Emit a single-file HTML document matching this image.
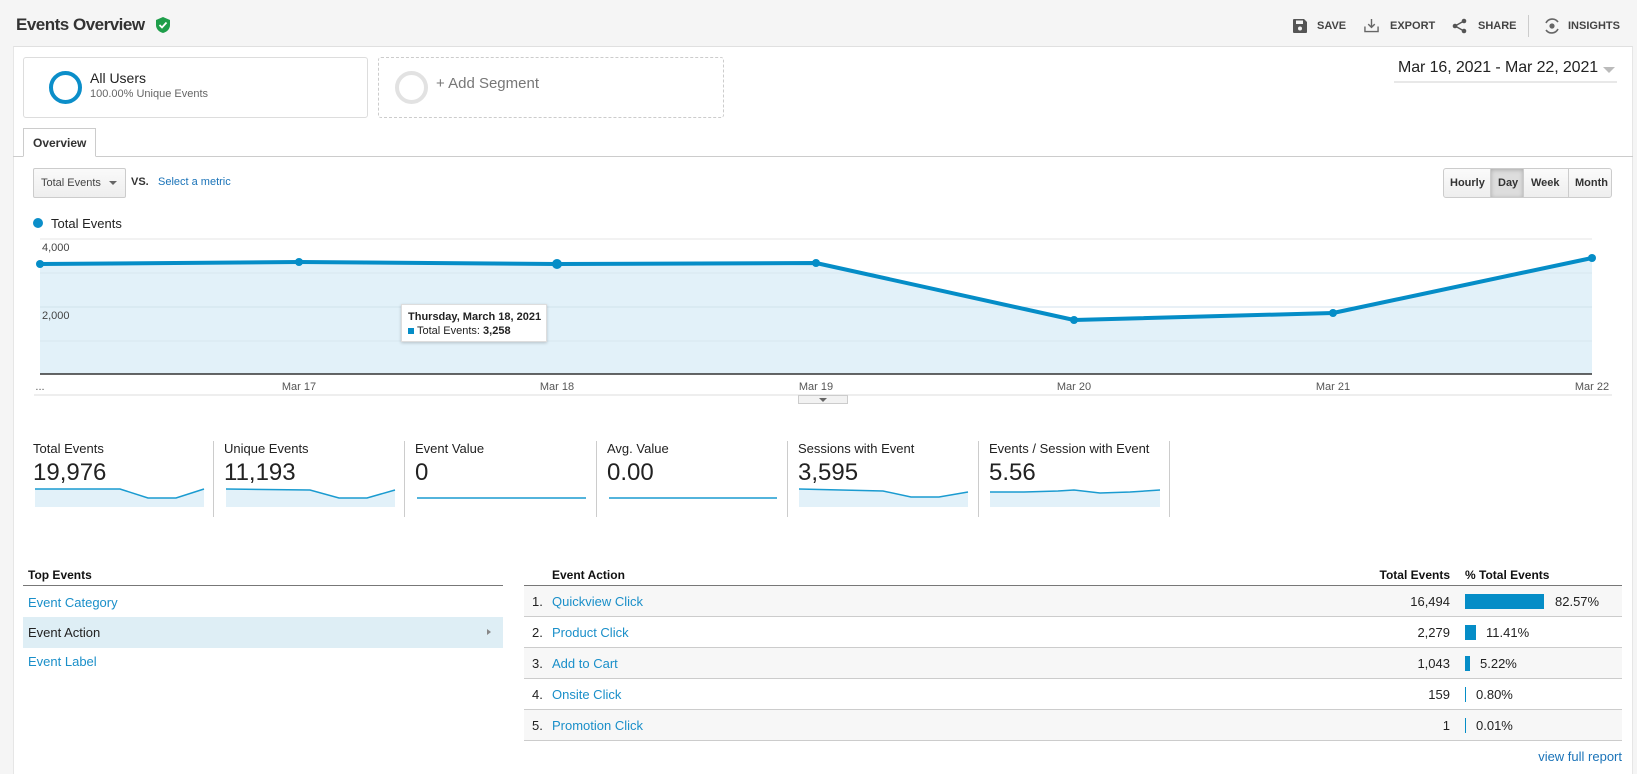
<!DOCTYPE html>
<html><head><meta charset="utf-8"><style>
*{margin:0;padding:0;box-sizing:border-box}
body{width:1637px;height:774px;overflow:hidden;background:#f5f5f5;font-family:"Liberation Sans",Arial,sans-serif;color:#222;position:relative}
.a{position:absolute;white-space:nowrap}
.hb{font-size:11px;font-weight:bold;color:#444;top:20px}
.lnk{color:#1a8fc9}
.ml{font-size:13px;color:#222}
.mv{font-size:24px;color:#222}
.dv{position:absolute;top:441px;height:76px;width:1px;background:#ccc}
.row{position:absolute;left:524px;width:1098px;height:31px;border-bottom:1px solid #ccc;font-size:13px}
.row.o{background:#f7f7f7}
.row span{position:absolute;top:8px}
</style></head><body>
<!-- header -->
<div class="a" style="left:16px;top:15px;font-size:17px;font-weight:bold;color:#333;letter-spacing:-0.5px">Events Overview</div>
<svg class="a" style="left:156px;top:17px" width="14" height="16" viewBox="0 0 14 16"><path d="M7 0L14 3V8C14 12 11 15 7 16C3 15 0 12 0 8V3Z" fill="#1e9e4a"/><path d="M3.5 8L6 10.5L10.5 5.5" stroke="#fff" stroke-width="1.8" fill="none"/></svg>
<svg class="a" style="left:1293px;top:19px" width="14" height="14" viewBox="0 0 14 14"><path d="M0 1Q0 0 1 0H11L14 3V13Q14 14 13 14H1Q0 14 0 13Z" fill="#555"/><rect x="3" y="1.5" width="7" height="3.5" fill="#f5f5f5"/><circle cx="7" cy="9.5" r="2" fill="#f5f5f5"/></svg>
<div class="a hb" style="left:1317px">SAVE</div>
<svg class="a" style="left:1364px;top:18px" width="15" height="15" viewBox="0 0 16 16" fill="none" stroke="#666" stroke-width="1.5"><path d="M8 1V10M4.5 6.5L8 10L11.5 6.5M1 9V14.5H15V9"/></svg>
<div class="a hb" style="left:1390px">EXPORT</div>
<svg class="a" style="left:1452px;top:18px" width="15" height="16" viewBox="0 0 15 16"><circle cx="12" cy="3" r="2.3" fill="#555"/><circle cx="3" cy="8" r="2.3" fill="#555"/><circle cx="12" cy="13" r="2.3" fill="#555"/><path d="M12 3L3 8L12 13" stroke="#555" stroke-width="1.4" fill="none"/></svg>
<div class="a hb" style="left:1478px">SHARE</div>
<div class="a" style="left:1528px;top:15px;width:1px;height:22px;background:#ccc"></div>
<svg class="a" style="left:1543px;top:17px" width="18" height="18" viewBox="0 0 18 18" fill="none" stroke="#666" stroke-width="1.6"><path d="M3 6A7 7 0 0 1 15 5M15 12A7 7 0 0 1 3 13"/><circle cx="9" cy="9" r="2.6" fill="#666" stroke="none"/></svg>
<div class="a hb" style="left:1568px">INSIGHTS</div>
<!-- panel -->
<div class="a" style="left:13px;top:46px;width:1620px;height:728px;background:#fff;border-top:1px solid #e0e0e0;border-left:1px solid #e6e6e6;border-right:1px solid #e6e6e6"></div>
<div class="a" style="left:23px;top:57px;width:345px;height:61px;border:1px solid #ddd;border-radius:3px"></div>
<div class="a" style="left:49px;top:71px;width:33px;height:33px;border:4px solid #0b8ec9;border-radius:50%"></div>
<div class="a" style="left:90px;top:70px;font-size:14px;color:#222">All Users</div>
<div class="a" style="left:90px;top:88px;font-size:11px;color:#666">100.00% Unique Events</div>
<div class="a" style="left:378px;top:57px;width:346px;height:61px;border:1px dashed #ccc;border-radius:3px"></div>
<div class="a" style="left:395px;top:71px;width:33px;height:33px;border:4px solid #e2e2e2;border-radius:50%"></div>
<div class="a" style="left:436px;top:75px;font-size:15px;color:#777">+ Add Segment</div>
<div class="a" style="left:1398px;top:59px;font-size:16px;color:#222;letter-spacing:-0.1px">Mar 16, 2021 - Mar 22, 2021</div>
<div class="a" style="left:1603px;top:67px;width:0;height:0;border-left:6px solid transparent;border-right:6px solid transparent;border-top:6px solid #bbb"></div>
<div class="a" style="left:1394px;top:81px;width:223px;height:2px;background:#e8e8e8"></div>
<!-- tab -->
<div class="a" style="left:13px;top:156px;width:1620px;height:1px;background:#ccc"></div>
<div class="a" style="left:23px;top:128px;width:73px;height:29px;border:1px solid #ccc;border-bottom:1px solid #fff;background:#fff;font-size:12px;font-weight:bold;padding:7px 0 0 9px;color:#333">Overview</div>
<!-- controls -->
<div class="a" style="left:33px;top:168px;width:93px;height:30px;border:1px solid #ccc;border-radius:2px;background:linear-gradient(#fafafa,#eee);font-size:11px;color:#444;padding:8px 0 0 7px">Total Events</div>
<div class="a" style="left:109px;top:181px;border-left:4px solid transparent;border-right:4px solid transparent;border-top:4px solid #666"></div>
<div class="a" style="left:131px;top:176px;font-size:11px;font-weight:bold;color:#333">VS.</div>
<div class="a" style="left:158px;top:176px;font-size:11px;color:#1a73b8">Select a metric</div>
<div class="a" style="left:1443px;top:168px;width:169px;height:30px;border:1px solid #ccc;border-radius:3px;background:linear-gradient(#fbfbfb,#eee);font-size:11px;font-weight:bold;color:#333">
<span class="a" style="left:6px;top:8px">Hourly</span>
<span class="a" style="left:46px;top:0;width:34px;height:28px;background:#ddd;box-shadow:inset 0 1px 4px #aaa;border-left:1px solid #ccc;border-right:1px solid #ccc"></span>
<span class="a" style="left:54px;top:8px">Day</span>
<span class="a" style="left:87px;top:8px">Week</span>
<span class="a" style="left:124px;top:0;width:1px;height:28px;background:#ccc"></span>
<span class="a" style="left:131px;top:8px">Month</span></div>
<!-- legend -->
<div class="a" style="left:33px;top:218px;width:10px;height:10px;border-radius:50%;background:#0b8ec9"></div>
<div class="a" style="left:51px;top:216px;font-size:13px;color:#222">Total Events</div>
<!-- chart -->
<svg class="a" style="left:0;top:230px" width="1637" height="180">
<line x1="40" y1="9" x2="1592" y2="9" stroke="#e6e6e6"/>
<polygon points="40,34 299,32 557,34 816,33 1074,90 1333,83 1592,28 1592,144 40,144" fill="#e2f1f9"/>
<line x1="40" y1="43" x2="1592" y2="43" stroke="#d8e8f0"/>
<line x1="40" y1="77" x2="1592" y2="77" stroke="#d0e2ec"/>
<line x1="40" y1="111" x2="1592" y2="111" stroke="#d8e8f0"/>
<polyline points="40,34 299,32 557,34 816,33 1074,90 1333,83 1592,28" fill="none" stroke="#058dc7" stroke-width="4" stroke-linejoin="round"/>
<g fill="#058dc7"><circle cx="40" cy="34" r="4"/><circle cx="299" cy="32" r="4"/><circle cx="557" cy="34" r="5"/><circle cx="816" cy="33" r="4"/><circle cx="1074" cy="90" r="4"/><circle cx="1333" cy="83" r="4"/><circle cx="1592" cy="28" r="4"/></g>
<line x1="40" y1="144" x2="1592" y2="144" stroke="#333" stroke-width="1.5"/>
<text x="42" y="21" font-size="11" fill="#444" font-family="Liberation Sans">4,000</text>
<text x="42" y="89" font-size="11" fill="#444" font-family="Liberation Sans">2,000</text>
<g font-size="11" fill="#555" font-family="Liberation Sans" text-anchor="middle"><text x="40" y="160">...</text><text x="299" y="160">Mar 17</text><text x="557" y="160">Mar 18</text><text x="816" y="160">Mar 19</text><text x="1074" y="160">Mar 20</text><text x="1333" y="160">Mar 21</text><text x="1592" y="160">Mar 22</text></g>
<line x1="34" y1="165" x2="1612" y2="165" stroke="#ddd"/>
<rect x="798.5" y="165.5" width="49" height="8" fill="#f2f2f2" stroke="#ccc"/>
<polygon points="819,168 827,168 823,172" fill="#666"/>
</svg>
<div class="a" style="left:401px;top:304px;width:146px;height:38px;background:#fff;border:1px solid #ddd;box-shadow:0 1px 3px rgba(0,0,0,.2);font-size:11px;padding:5px 0 0 6px;line-height:14px">
<b>Thursday, March 18, 2021</b><br><span style="display:inline-block;width:6px;height:6px;background:#058dc7;margin-right:3px"></span>Total Events: <b>3,258</b></div>
<!-- metrics -->
<div class="a ml" style="left:33px;top:441px">Total Events</div><div class="a mv" style="left:33px;top:459px">19,976</div>
<div class="a ml" style="left:224px;top:441px">Unique Events</div><div class="a mv" style="left:224px;top:459px">11,193</div>
<div class="a ml" style="left:415px;top:441px">Event Value</div><div class="a mv" style="left:415px;top:459px">0</div>
<div class="a ml" style="left:607px;top:441px">Avg. Value</div><div class="a mv" style="left:607px;top:459px">0.00</div>
<div class="a ml" style="left:798px;top:441px">Sessions with Event</div><div class="a mv" style="left:798px;top:459px">3,595</div>
<div class="a ml" style="left:989px;top:441px">Events / Session with Event</div><div class="a mv" style="left:989px;top:459px">5.56</div>
<div class="dv" style="left:213px"></div><div class="dv" style="left:404px"></div><div class="dv" style="left:596px"></div><div class="dv" style="left:787px"></div><div class="dv" style="left:978px"></div><div class="dv" style="left:1169px"></div>
<svg class="a" style="left:0;top:480px" width="1200" height="30">
<g fill="#e2f1f9"><polygon points="35,9 120,9 148,18 176,18 204,9 204,27 35,27"/><polygon points="226,9 310,10 339,18 367,18 395,10 395,27 226,27"/><polygon points="799,9 883,11 911,17 939,17 968,12 968,27 799,27"/><polygon points="990,12 1024,12 1058,11 1074,10 1100,13 1130,12 1160,10 1160,27 990,27"/></g>
<g fill="none" stroke="#1a9bd0" stroke-width="1.5"><polyline points="35,9 120,9 148,18 176,18 204,9"/><polyline points="226,9 310,10 339,18 367,18 395,10"/><line x1="417" y1="18" x2="586" y2="18"/><line x1="609" y1="18" x2="777" y2="18"/><polyline points="799,9 883,11 911,17 939,17 968,12"/><polyline points="990,12 1024,12 1058,11 1074,10 1100,13 1130,12 1160,10"/></g></svg>
<!-- left table -->
<div class="a" style="left:28px;top:568px;font-size:12px;font-weight:bold;color:#111">Top Events</div>
<div class="a" style="left:23px;top:585px;width:480px;height:1px;background:#777"></div>
<div class="a lnk" style="left:28px;top:595px;font-size:13px">Event Category</div>
<div class="a" style="left:23px;top:617px;width:480px;height:31px;background:#deeef5"></div>
<div class="a" style="left:28px;top:625px;font-size:13px;color:#222">Event Action</div>
<div class="a" style="left:487px;top:629px;border-top:3.5px solid transparent;border-bottom:3.5px solid transparent;border-left:4px solid #888"></div>
<div class="a lnk" style="left:28px;top:654px;font-size:13px">Event Label</div>
<!-- right table -->
<div class="a" style="left:552px;top:568px;font-size:12px;font-weight:bold;color:#111">Event Action</div>
<div class="a" style="left:1350px;top:568px;width:100px;text-align:right;font-size:12px;font-weight:bold;color:#111">Total Events</div>
<div class="a" style="left:1465px;top:568px;font-size:12px;font-weight:bold;color:#111">% Total Events</div>
<div class="a" style="left:524px;top:585px;width:1098px;height:1px;background:#777"></div>
<div class="row o" style="top:586px"><span style="left:8px">1.</span><span class="lnk" style="left:28px">Quickview Click</span><span style="right:172px">16,494</span><i class="a" style="left:941px;top:8px;width:79px;height:15px;background:#058dc7"></i><span style="left:1031px">82.57%</span></div>
<div class="row" style="top:617px"><span style="left:8px">2.</span><span class="lnk" style="left:28px">Product Click</span><span style="right:172px">2,279</span><i class="a" style="left:941px;top:8px;width:11px;height:15px;background:#058dc7"></i><span style="left:962px">11.41%</span></div>
<div class="row o" style="top:648px"><span style="left:8px">3.</span><span class="lnk" style="left:28px">Add to Cart</span><span style="right:172px">1,043</span><i class="a" style="left:941px;top:8px;width:5px;height:15px;background:#058dc7"></i><span style="left:956px">5.22%</span></div>
<div class="row" style="top:679px"><span style="left:8px">4.</span><span class="lnk" style="left:28px">Onsite Click</span><span style="right:172px">159</span><i class="a" style="left:941px;top:8px;width:1px;height:15px;background:#058dc7"></i><span style="left:952px">0.80%</span></div>
<div class="row o" style="top:710px"><span style="left:8px">5.</span><span class="lnk" style="left:28px">Promotion Click</span><span style="right:172px">1</span><i class="a" style="left:941px;top:8px;width:1px;height:15px;background:#058dc7"></i><span style="left:952px">0.01%</span></div>
<div class="a" style="left:1522px;top:749px;width:100px;text-align:right;font-size:13px;color:#1a73b8">view full report</div>
</body></html>
